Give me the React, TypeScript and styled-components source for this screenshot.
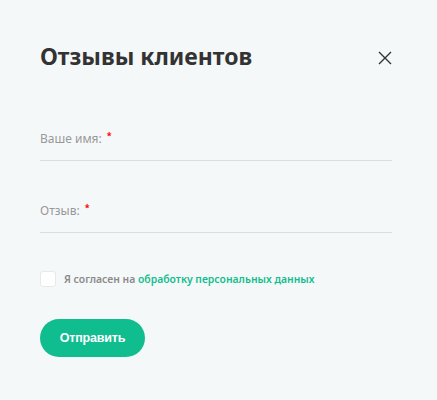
import React, { useState } from 'react';
import styled, { createGlobalStyle } from 'styled-components';

const GlobalStyle = createGlobalStyle`
  html, body {
    margin: 0;
    padding: 0;
    background-color: #f5f8f9;
  }
  * {
    box-sizing: border-box;
  }
`;

const Modal = styled.div`
  width: 437px;
  min-height: 400px;
  padding: 40px 45px 0 40px;
  background-color: #f5f8f9;
  font-family: 'Noto Sans', 'Open Sans', sans-serif;
`;

const Header = styled.div`
  display: flex;
  align-items: center;
  justify-content: space-between;
  height: 36px;
`;

const Title = styled.h2`
  margin: 0 0 4px 0;
  font-size: 23px;
  font-weight: 700;
  color: #333;
  line-height: 32px;
`;

const CloseButton = styled.button`
  display: flex;
  align-items: center;
  justify-content: center;
  width: 14px;
  height: 16px;
  padding: 0;
  border: none;
  background: none;
  cursor: pointer;
`;

const Form = styled.form`
  display: flex;
  flex-direction: column;
  margin-top: 51px;
`;

const Field = styled.label<{ $gap?: number }>`
  display: flex;
  align-items: flex-start;
  height: 34px;
  padding-top: 4px;
  margin-bottom: ${(p) => p.$gap ?? 0}px;
  border-bottom: 1px solid #dadddf;
  font-size: 12px;
  color: #999;
  line-height: 16px;
`;

const Required = styled.span`
  color: #f00;
  margin-left: 5px;
  font-size: 9px;
  font-weight: 700;
  line-height: 10px;
`;

const Agreement = styled.label`
  display: flex;
  align-items: center;
  gap: 8px;
  margin-top: 38px;
  font-size: 10.4px;
  font-weight: 600;
  color: #8a8a8a;
  cursor: pointer;
`;

const Box = styled.span<{ $checked: boolean }>`
  flex: none;
  width: 16px;
  height: 16px;
  border: 1px solid #e6e8ea;
  border-radius: 3px;
  background-color: ${(p) => (p.$checked ? '#0fbd8c' : '#fff')};
`;

const Link = styled.a`
  color: #12bd8e;
  text-decoration: none;
`;

const Submit = styled.button`
  align-self: flex-start;
  width: 105px;
  height: 38px;
  margin-top: 32px;
  padding: 0;
  border: none;
  border-radius: 19px;
  background-color: #0fbd8f;
  color: #fff;
  font-family: 'Liberation Sans', Arial, sans-serif;
  font-size: 12.5px;
  font-weight: 700;
  letter-spacing: -0.2px;
  cursor: pointer;
`;

const App: React.FC = () => {
  const [agreed, setAgreed] = useState(false);

  return (
    <>
      <GlobalStyle />
      <Modal>
        <Header>
          <Title>Отзывы клиентов</Title>
          <CloseButton aria-label="Закрыть">
            <svg width="14" height="14" viewBox="0 0 14 14">
              <path d="M1 1 L13 13 M13 1 L1 13" stroke="#333" strokeWidth="1.4" />
            </svg>
          </CloseButton>
        </Header>
        <Form onSubmit={(e) => e.preventDefault()}>
          <Field $gap={38}>
            Ваше имя:<Required>*</Required>
          </Field>
          <Field>
            Отзыв:<Required>*</Required>
          </Field>
          <Agreement onClick={() => setAgreed(!agreed)}>
            <Box $checked={agreed} />
            <span>
              Я согласен на <Link href="#">обработку персональных данных</Link>
            </span>
          </Agreement>
          <Submit type="submit">Отправить</Submit>
        </Form>
      </Modal>
    </>
  );
};

export default App;
